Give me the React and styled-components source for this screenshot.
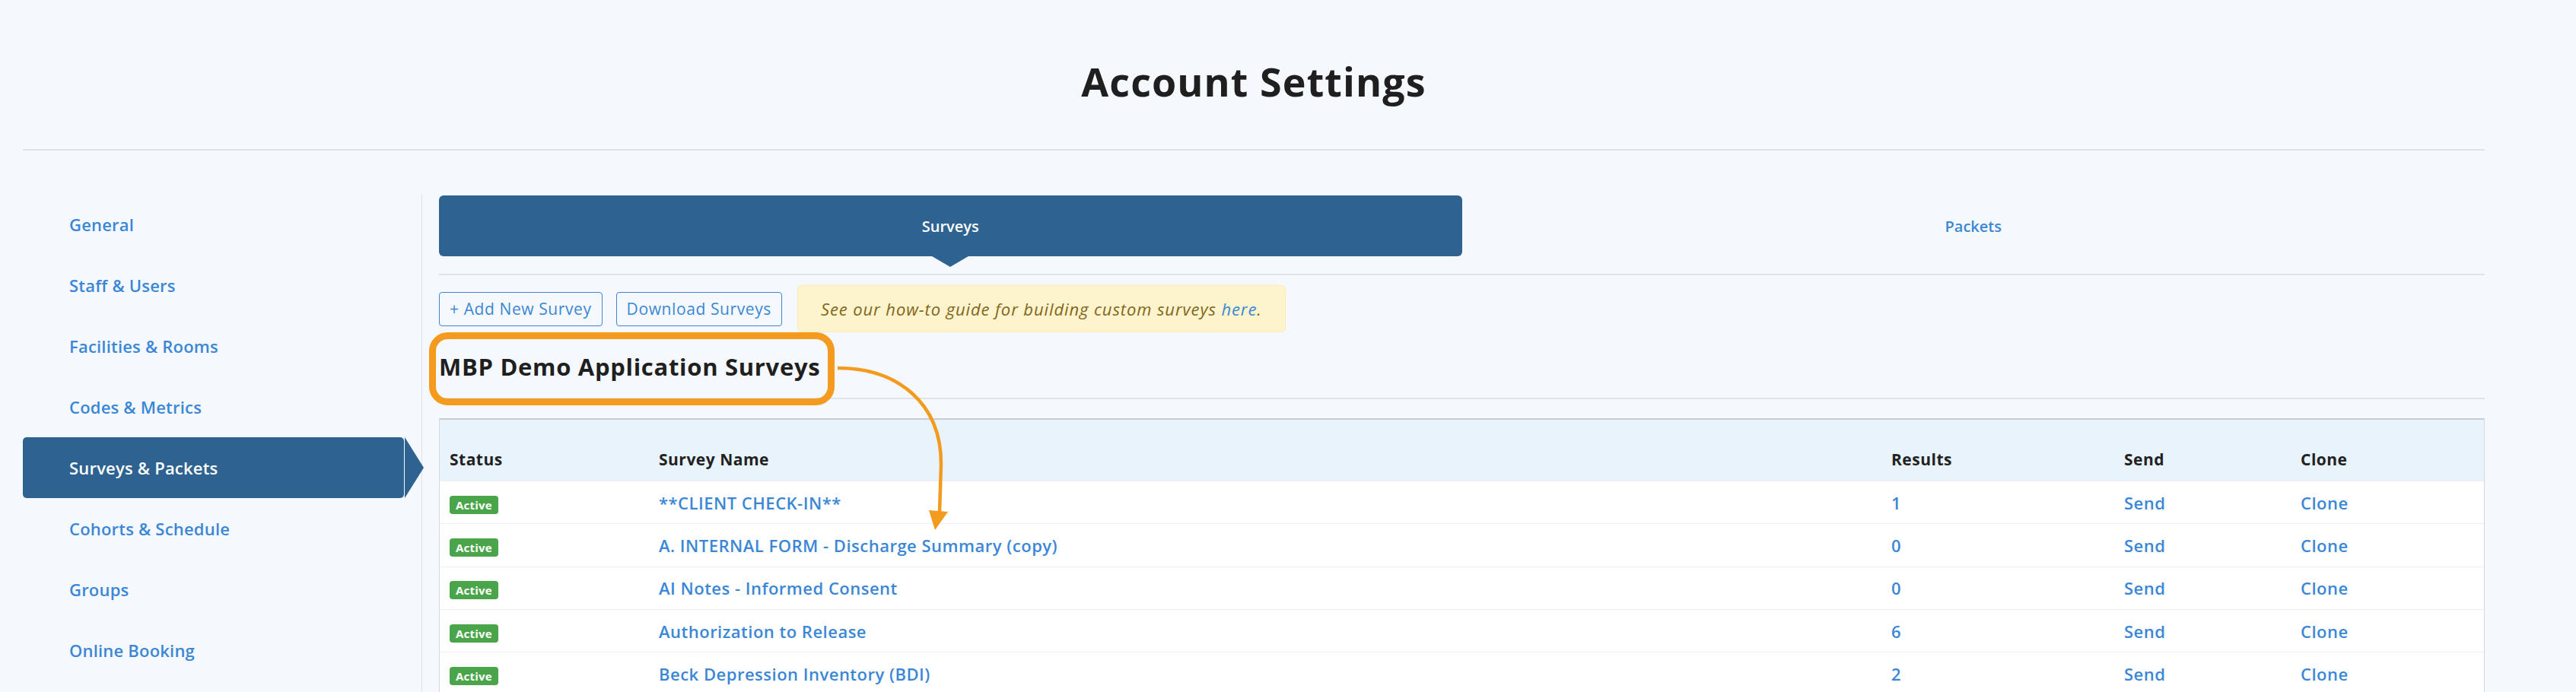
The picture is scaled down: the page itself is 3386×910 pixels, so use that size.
import styled, { createGlobalStyle } from 'styled-components';

const Blue = '#3b87d6';
const Navy = '#2e6391';
const Ink = '#1f1f1f';
const Rule = '#dfe4e9';

const GlobalStyle = createGlobalStyle`
  html, body {
    margin: 0;
    background: #f5f9fd;
  }
  body {
    font-family: "Open Sans", "DejaVu Sans", sans-serif;
    color: ${Ink};
  }
`;

const StyledPage = styled.div`
  position: relative;
  width: 3236px;
  height: 910px;
  padding-left: 30px;
  overflow: hidden;
`;

const StyledHeader = styled.header`
  height: 196px;
  display: flex;
  align-items: center;
  justify-content: center;
  border-bottom: 2px solid ${Rule};
`;

const StyledTitle = styled.h1`
  margin: 16px 0 0;
  font-size: 52px;
  font-weight: 700;
  letter-spacing: 1.1px;
`;

const StyledBody = styled.div`
  display: flex;
  padding-top: 59px;
`;

const StyledSidebar = styled.nav`
  width: 524px;
  flex-shrink: 0;
  border-right: 1px solid ${Rule};
  min-height: 700px;
  margin-top: -2px;
`;

const StyledNavItem = styled.a`
  position: relative;
  display: flex;
  align-items: center;
  width: 501px;
  height: 80px;
  box-sizing: border-box;
  padding-left: 61px;
  border-radius: 5px;
  font-size: 22px;
  font-weight: 600;
  color: ${({ $active }) => ($active ? '#fff' : Blue)};
  background: ${({ $active }) => ($active ? Navy : 'transparent')};
  text-decoration: none;
  letter-spacing: 0.2px;

  &::after {
    content: '';
    display: ${({ $active }) => ($active ? 'block' : 'none')};
    position: absolute;
    top: 0;
    left: 502px;
    border-top: 40px solid transparent;
    border-bottom: 40px solid transparent;
    border-left: 25px solid ${Navy};
  }
`;

const StyledMain = styled.main`
  flex: 1;
  padding-left: 22px;
  min-width: 0;
`;

const StyledTabs = styled.div`
  display: flex;
  padding-bottom: 23px;
  border-bottom: 2px solid ${Rule};
`;

const StyledTab = styled.div`
  position: relative;
  flex: 1;
  height: 80px;
  display: flex;
  align-items: center;
  justify-content: center;
  border-radius: 6px;
  font-size: 20px;
  font-weight: 600;
  color: ${({ $active }) => ($active ? '#fff' : Blue)};
  background: ${({ $active }) => ($active ? Navy : 'transparent')};

  &::after {
    content: '';
    display: ${({ $active }) => ($active ? 'block' : 'none')};
    position: absolute;
    top: 80px;
    left: 50%;
    margin-left: -24px;
    border-left: 24px solid transparent;
    border-right: 24px solid transparent;
    border-top: 14px solid ${Navy};
  }
`;

const StyledToolbar = styled.div`
  display: flex;
  align-items: center;
  gap: 18px;
  margin-top: 13px;
`;

const StyledOutlineButton = styled.button`
  height: 45px;
  padding: 0 13px;
  border: 1px solid ${Blue};
  border-radius: 4px;
  background: transparent;
  font-family: inherit;
  font-size: 21px;
  letter-spacing: 0.6px;
  color: ${Blue};
`;

const StyledNote = styled.div`
  height: 62px;
  display: flex;
  align-items: center;
  box-sizing: border-box;
  padding: 0 30px;
  margin-left: 2px;
  border: 1px solid #fbecb8;
  border-radius: 5px;
  background: #fdf4cd;
  font-size: 22px;
  font-style: italic;
  letter-spacing: 0.9px;
  color: #836619;

  a {
    color: ${Blue};
    text-decoration: none;
  }
`;

const StyledSectionTitle = styled.h2`
  margin: 0;
  height: 82px;
  padding-top: 4px;
  display: flex;
  align-items: center;
  border-bottom: 2px solid ${Rule};
  font-size: 31px;
  font-weight: 700;
  letter-spacing: 0.7px;
`;

const StyledTable = styled.div`
  margin-top: 25px;
  border: 1px solid #d3d9de;
  border-top: 2px solid #c9cdd1;
  border-bottom: none;
`;

const StyledRow = styled.div`
  display: grid;
  grid-template-columns: 275px 1620px 306px 232px 1fr;
  align-items: ${({ $head }) => ($head ? 'end' : 'center')};
  height: ${({ $head }) => ($head ? '80px' : '56.3px')};
  box-sizing: border-box;
  padding-bottom: ${({ $head }) => ($head ? '14px' : '0')};
  background: ${({ $head }) => ($head ? '#e9f3fc' : '#fff')};
  border-top: ${({ $head }) => ($head ? 'none' : '1px solid #e9eff4')};
`;

const StyledCell = styled.div`
  padding-left: 13px;
  font-size: ${({ $head }) => ($head ? '21px' : '22px')};
  font-weight: ${({ $head }) => ($head ? 700 : 600)};
  letter-spacing: 0.5px;
  color: ${({ $head }) => ($head ? '#222' : Blue)};
  white-space: nowrap;
`;

const StyledBadge = styled.span`
  display: inline-flex;
  align-items: center;
  height: 24px;
  padding: 0 8px;
  border-radius: 4px;
  background: #4aa54a;
  color: #fff;
  font-size: 15px;
  font-weight: 700;
  letter-spacing: 0.2px;
`;

const StyledAnnotation = styled.svg`
  position: absolute;
  left: 0;
  top: 0;
  pointer-events: none;
`;

const navItems = [
  'General',
  'Staff & Users',
  'Facilities & Rooms',
  'Codes & Metrics',
  'Surveys & Packets',
  'Cohorts & Schedule',
  'Groups',
  'Online Booking',
];

const surveys = [
  { name: '**CLIENT CHECK-IN**', results: 1 },
  { name: 'A. INTERNAL FORM - Discharge Summary (copy)', results: 0 },
  { name: 'AI Notes - Informed Consent', results: 0 },
  { name: 'Authorization to Release', results: 6 },
  { name: 'Beck Depression Inventory (BDI)', results: 2 },
];

function Annotation() {
  return (
    <StyledAnnotation width="1300" height="720" viewBox="0 0 1300 720">
      <rect
        x="568.5"
        y="441.5"
        width="524"
        height="87"
        rx="20"
        fill="none"
        stroke="#f39a1f"
        strokeWidth="9"
      />
      <path
        d="M1101 484 C1180 484 1237 530 1237 610 L1235 674"
        fill="none"
        stroke="#f39a1f"
        strokeWidth="4.5"
      />
      <polygon points="1221,671 1246,673 1229,697" fill="#f39a1f" />
    </StyledAnnotation>
  );
}

export default function App() {
  return (
    <>
      <GlobalStyle />
      <StyledPage>
        <StyledHeader>
          <StyledTitle>Account Settings</StyledTitle>
        </StyledHeader>
        <StyledBody>
          <StyledSidebar>
            {navItems.map((item) => (
              <StyledNavItem key={item} $active={item === 'Surveys & Packets'}>
                {item}
              </StyledNavItem>
            ))}
          </StyledSidebar>
          <StyledMain>
            <StyledTabs>
              <StyledTab $active>Surveys</StyledTab>
              <StyledTab>Packets</StyledTab>
            </StyledTabs>
            <StyledToolbar>
              <StyledOutlineButton>+ Add New Survey</StyledOutlineButton>
              <StyledOutlineButton>Download Surveys</StyledOutlineButton>
              <StyledNote>
                See our how-to guide for building custom surveys&nbsp;<a href="#">here</a>.
              </StyledNote>
            </StyledToolbar>
            <StyledSectionTitle>MBP Demo Application Surveys</StyledSectionTitle>
            <StyledTable>
              <StyledRow $head>
                <StyledCell $head>Status</StyledCell>
                <StyledCell $head>Survey Name</StyledCell>
                <StyledCell $head>Results</StyledCell>
                <StyledCell $head>Send</StyledCell>
                <StyledCell $head>Clone</StyledCell>
              </StyledRow>
              {surveys.map((s) => (
                <StyledRow key={s.name}>
                  <StyledCell>
                    <StyledBadge>Active</StyledBadge>
                  </StyledCell>
                  <StyledCell>{s.name}</StyledCell>
                  <StyledCell>{s.results}</StyledCell>
                  <StyledCell>Send</StyledCell>
                  <StyledCell>Clone</StyledCell>
                </StyledRow>
              ))}
            </StyledTable>
          </StyledMain>
        </StyledBody>
        <Annotation />
      </StyledPage>
    </>
  );
}
